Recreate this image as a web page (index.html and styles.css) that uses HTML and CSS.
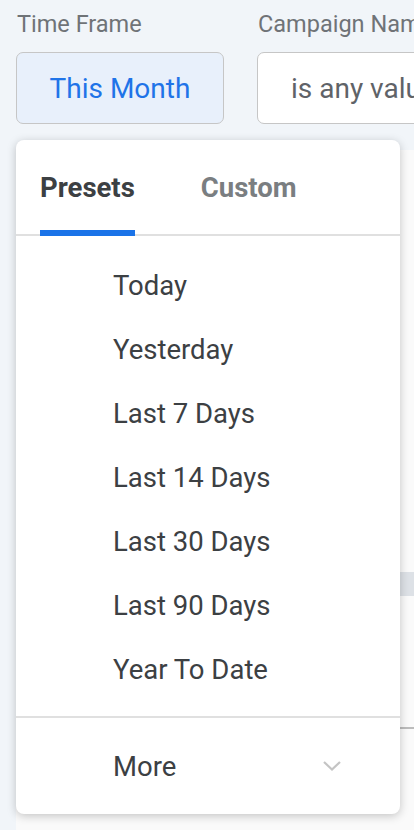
FILE: index.html
```html
<!DOCTYPE html>
<html lang="en">
<head>
    <meta charset="UTF-8">
    <meta name="viewport" content="width=device-width, initial-scale=1.0">
    <title>Time Frame Filter</title>
    <link rel="stylesheet" href="styles.css">
</head>
<body>

    <!-- Filter bar -->
    <div class="filters">
        <div class="filter">
            <div class="filter-label">Time Frame</div>
            <button class="filter-button active">This Month</button>
        </div>
        <div class="filter">
            <div class="filter-label">Campaign Name</div>
            <button class="filter-button">is any value</button>
        </div>
    </div>

    <!-- Content behind the dropdown -->
    <div class="content">
        <div class="content-band"></div>
        <div class="content-line"></div>
    </div>

    <!-- Time frame dropdown -->
    <div class="dropdown">
        <div class="tabs">
            <div class="tab selected">Presets</div>
            <div class="tab">Custom</div>
        </div>
        <ul class="preset-list">
            <li>Today</li>
            <li>Yesterday</li>
            <li>Last 7 Days</li>
            <li>Last 14 Days</li>
            <li>Last 30 Days</li>
            <li>Last 90 Days</li>
            <li>Year To Date</li>
        </ul>
        <div class="more">
            <span>More</span>
            <svg class="chevron" width="20" height="12" viewBox="0 0 20 12">
                <path d="M2 2 L10 9.5 L18 2" fill="none" stroke="#c4c4c4" stroke-width="2.2"/>
            </svg>
        </div>
    </div>

</body>
</html>
```

FILE: styles.css
```css
/* General body styles */
body {
    font-family: Roboto, "Liberation Sans", sans-serif;
    background-color: #f1f5f9;
    margin: 0;
    width: 414px;
    height: 830px;
    overflow: hidden;
    position: relative;
}

/* Filter bar */
.filters {
    display: flex;
    gap: 33px;
    padding: 9px 0 0 16px;
    white-space: nowrap;
}

.filter-label {
    font-size: 23.5px;
    color: #6f7377;
    padding-left: 1px;
    height: 30px;
    line-height: 30px;
}

.filter-button {
    margin-top: 13px;
    height: 72px;
    width: 208px;
    border: 1px solid #c6c6c6;
    border-radius: 7px;
    background: #fff;
    font-family: inherit;
    font-size: 28px;
    color: #5f6368;
    text-align: left;
    padding: 0 33px;
}

.filter-button.active {
    background: #e8f0fb;
    color: #1f74e8;
    text-align: center;
    width: 208px;
    padding: 0;
}

/* Content behind the dropdown */
.content {
    position: absolute;
    left: 16px;
    right: 0;
    top: 150px;
    bottom: 0;
    background: #fafafa;
}

.content-band {
    margin-top: 422px;
    height: 24px;
    background: #dde1e6;
}

.content-line {
    margin-top: 131px;
    height: 2px;
    background: #bcbcbc;
}

/* Dropdown */
.dropdown {
    position: absolute;
    left: 16px;
    top: 140px;
    width: 384px;
    height: 674px;
    background: #fff;
    border-radius: 8px;
    box-shadow: 0 2px 10px rgba(0, 0, 0, 0.22);
    display: flex;
    flex-direction: column;
}

.tabs {
    display: flex;
    gap: 66px;
    padding: 0 24px;
    height: 94px;
    border-bottom: 2px solid #e0e0e0;
}

.tab {
    font-size: 27.5px;
    font-weight: bold;
    color: #7a7e81;
    line-height: 96px;
    height: 94px;
    box-sizing: border-box;
}

.tab.selected {
    color: #3c4043;
    border-bottom: 6px solid #1a73e8;
    margin-bottom: -2px;
    height: 96px;
}

.preset-list {
    list-style: none;
    margin: 0;
    padding: 18px 0 0 97px;
    height: 462px;
    border-bottom: 2px solid #e0e0e0;
}

.preset-list li {
    font-size: 27.5px;
    color: #3c4043;
    height: 64px;
    line-height: 64px;
}

.more {
    display: flex;
    align-items: center;
    justify-content: space-between;
    padding: 0 58px 0 97px;
    flex: 1;
    font-size: 27.5px;
    color: #3c4043;
}
```
